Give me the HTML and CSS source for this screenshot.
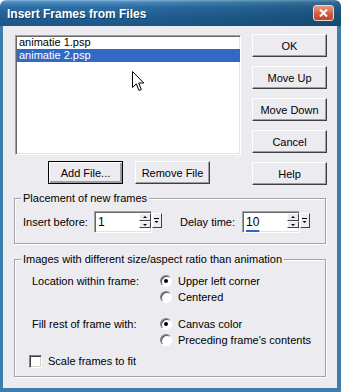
FILE: index.html
```html
<!DOCTYPE html>
<html lang="en">
<head>
    <meta charset="UTF-8">
    <meta name="viewport" content="width=device-width, initial-scale=1.0">
    <title>Insert Frames from Files</title>
    <link rel="stylesheet" href="styles.css">
</head>
<body>
    <div class="window">
        <div class="titlebar">
            <span class="title">Insert Frames from Files</span>
            <button class="close" aria-label="Close">
                <svg width="9" height="8" viewBox="0 0 9 8"><path d="M1 0.5L8 7.5M8 0.5L1 7.5" stroke="#fff" stroke-width="2"/></svg>
            </button>
        </div>
        <div class="frame">
            <div class="top">
                <div class="files">
                    <div class="listbox">
                        <div class="item">animatie 1.psp</div>
                        <div class="item selected">animatie 2.psp</div>
                        <svg class="cursor" width="13" height="21" viewBox="0 0 13 21">
                            <path d="M0.5 0.5V16.5L4.3 12.8L7 19.5L9.3 18.5L6.7 12H11.8Z" fill="#fff" stroke="#000" stroke-width="1" stroke-linejoin="miter"/>
                        </svg>
                    </div>
                    <div class="file-buttons">
                        <button class="btn default">Add File...</button>
                        <button class="btn">Remove File</button>
                    </div>
                </div>
                <div class="side-buttons">
                    <button class="btn">OK</button>
                    <button class="btn">Move Up</button>
                    <button class="btn">Move Down</button>
                    <button class="btn">Cancel</button>
                    <button class="btn">Help</button>
                </div>
            </div>

            <fieldset class="group placement">
                <legend>Placement of new frames</legend>
                <div class="spin-row">
                    <span class="spin-label insert">Insert before:</span>
                    <div class="spin">
                        <div class="spin-edit">
                            <span class="value">1</span>
                            <span class="arrows"><span class="arrow up"></span><span class="arrow down"></span></span>
                        </div>
                        <span class="drop"><svg width="6" height="7" viewBox="0 0 6 7"><path d="M0 1.5H5" stroke="#000"/><path d="M0.5 4H4.5L2.5 6Z" fill="#000"/></svg></span>
                    </div>
                    <span class="spin-label delay">Delay time:</span>
                    <div class="spin">
                        <div class="spin-edit">
                            <span class="value focused">10</span>
                            <span class="arrows"><span class="arrow up"></span><span class="arrow down"></span></span>
                        </div>
                        <span class="drop"><svg width="6" height="7" viewBox="0 0 6 7"><path d="M0 1.5H5" stroke="#000"/><path d="M0.5 4H4.5L2.5 6Z" fill="#000"/></svg></span>
                    </div>
                </div>
            </fieldset>

            <fieldset class="group images">
                <legend>Images with different size/aspect ratio than animation</legend>
                <div class="option-row">
                    <span class="option-label">Location within frame:</span>
                    <div class="radios">
                        <label class="radio-item"><span class="radio checked"></span>Upper left corner</label>
                        <label class="radio-item"><span class="radio"></span>Centered</label>
                    </div>
                </div>
                <div class="option-row fill">
                    <span class="option-label">Fill rest of frame with:</span>
                    <div class="radios">
                        <label class="radio-item"><span class="radio checked"></span>Canvas color</label>
                        <label class="radio-item"><span class="radio"></span>Preceding frame's contents</label>
                    </div>
                </div>
                <label class="check-item"><span class="checkbox"></span>Scale frames to fit</label>
            </fieldset>
        </div>
    </div>
</body>
</html>
```

FILE: styles.css
```css
body {
    margin: 0;
    font-family: "Liberation Sans", Arial, sans-serif;
    font-size: 11px;
    color: #000;
    background: #ffffff;
}

.window {
    width: 341px;
    height: 392px;
    display: flex;
    flex-direction: column;
}

.titlebar {
    height: 26px;
    flex: none;
    display: flex;
    align-items: center;
    justify-content: space-between;
    padding: 0 7px 0 7px;
    box-sizing: border-box;
    border-radius: 6px 6px 0 0;
    background:
        linear-gradient(to right, rgba(0, 0, 0, 0) 35%, rgba(8, 50, 70, 0.35) 100%),
        linear-gradient(to bottom, #8dbbdc 0, #4b8cc0 2px, #2d6fa5 7px, #225f94 16px, #1d5686 100%);
}

.title {
    color: #fff;
    font-weight: bold;
    font-size: 12px;
    padding-top: 1px;
    text-shadow: 1px 1px #0d3a60;
}

.close {
    width: 21px;
    height: 16px;
    padding: 0;
    display: flex;
    align-items: center;
    justify-content: center;
    border: 1px solid #f0d6cc;
    border-radius: 3px;
    background: linear-gradient(to bottom, #e99a82, #d0593b 60%, #c0472c);
}

.frame {
    flex: 1;
    background: #ecebf0;
    border: solid #3e7cae;
    border-width: 0 4px 4px 3px;
    padding: 8px 10px 0 11px;
}

.top {
    display: flex;
}

.listbox {
    position: relative;
    width: 226px;
    height: 120px;
    box-sizing: border-box;
    margin: 1px 0 0 1px;
    padding: 0 0 0 1px;
    background: #fff;
    border: 1px solid;
    border-color: #a0a0a0 #fff #fff #a0a0a0;
    box-shadow: inset 1px 1px #696969, inset -1px -1px #e3e3e3;
}

.item {
    line-height: 13px;
    padding-left: 2px;
}

.item.selected {
    background: #316ac5;
    color: #fff;
}

.cursor {
    position: absolute;
    left: 116px;
    top: 35px;
}

.file-buttons {
    display: flex;
    gap: 12px;
    margin: 6px 0 0 34px;
}

.side-buttons {
    display: flex;
    flex-direction: column;
    gap: 9px;
    margin-left: 11px;
}

.btn {
    width: 75px;
    height: 23px;
    padding: 0;
    font-family: inherit;
    font-size: 11px;
    color: #000;
    background: #ecebf0;
    border: 1px solid;
    border-color: #fff #404040 #404040 #fff;
    box-shadow: inset -1px -1px #9d9da1;
}

.btn.default {
    border-color: #000;
    box-shadow: inset 1px 1px #fff, inset -2px -2px #9d9da1;
}

.group {
    width: 312px;
    box-sizing: border-box;
    min-width: 0;
    margin: 7px 0 0;
    padding: 0;
    border: 1px solid #a3a2a8;
    box-shadow: inset 1px 1px #fff, 1px 1px #fff;
}

.group legend {
    margin-left: 6px;
    padding: 0 2px;
    line-height: 13px;
    background: #ecebf0;
}

.group.images {
    margin-top: 9px;
}

.spin-row {
    display: flex;
    align-items: center;
    height: 22px;
    margin: 6px 0 10px 8px;
}

.spin-label.insert {
    width: 71px;
}

.spin-label.delay {
    width: 62px;
    margin-left: 18px;
}

.spin {
    display: flex;
    align-items: flex-start;
    height: 22px;
}

.spin-edit {
    width: 58px;
    height: 22px;
    box-sizing: border-box;
    display: flex;
    justify-content: space-between;
    align-items: center;
    padding: 0 0 0 3px;
    background: #fff;
    border: 1px solid;
    border-color: #a0a0a0 #fff #fff #a0a0a0;
    box-shadow: inset 1px 1px #696969, inset -1px -1px #e3e3e3;
}

.value {
    font-size: 12px;
}

.value.focused {
    text-decoration: underline;
    text-decoration-color: #3264c0;
    text-decoration-thickness: 2px;
    text-underline-offset: 4px;
}

.arrows {
    display: flex;
    flex-direction: column;
    width: 12px;
    align-self: flex-start;
    margin-top: 1px;
}

.arrow {
    height: 8px;
    box-sizing: border-box;
    display: flex;
    align-items: center;
    justify-content: center;
    background: #ecebf0;
    border: 1px solid;
    border-color: #fff #404040 #404040 #fff;
}

.arrow.down {
    height: 7px;
}

.arrow.up::before,
.arrow.down::before {
    content: "";
    border-left: 2px solid transparent;
    border-right: 2px solid transparent;
}

.arrow.up::before {
    border-bottom: 2px solid #000;
}

.arrow.down::before {
    border-top: 2px solid #000;
}

.drop {
    width: 10px;
    height: 15px;
    margin-top: 2px;
    box-sizing: border-box;
    display: flex;
    align-items: center;
    justify-content: center;
    background: #ecebf0;
    border: 1px solid;
    border-color: #fff #404040 #404040 #fff;
}

.option-row {
    display: flex;
    margin: 7px 0 0 17px;
}

.option-row.fill {
    margin-top: 11px;
}

.option-label {
    width: 128px;
    line-height: 16px;
}

.radio-item {
    display: flex;
    align-items: center;
    gap: 6px;
    height: 16px;
}

.radio {
    width: 12px;
    height: 12px;
    box-sizing: border-box;
    display: flex;
    align-items: center;
    justify-content: center;
    border-radius: 50%;
    background: #fff;
    border: 1px solid;
    border-color: #808080 #fff #fff #808080;
    box-shadow: inset 1px 1px #505050;
}

.radio.checked::after {
    content: "";
    width: 4px;
    height: 4px;
    border-radius: 50%;
    background: #000;
}

.check-item {
    display: flex;
    align-items: center;
    gap: 6px;
    height: 16px;
    margin: 5px 0 7px 14px;
}

.checkbox {
    width: 13px;
    height: 13px;
    box-sizing: border-box;
    background: #fff;
    border: 1px solid;
    border-color: #808080 #fff #fff #808080;
    box-shadow: inset 1px 1px #404040, inset -1px -1px #d4d0c8;
}
```
